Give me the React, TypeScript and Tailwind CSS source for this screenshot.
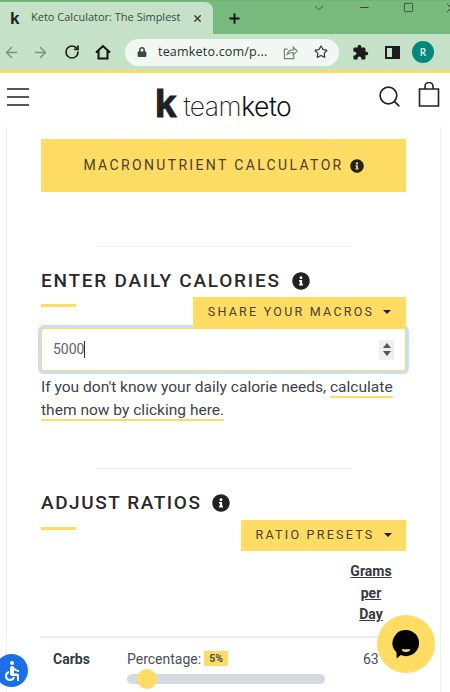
import { ArrowLeft, ArrowRight, ChevronDown, Minus, Plus, RotateCw, Search, Square, Star, X } from 'lucide-react';
import { FaInfoCircle, FaLock } from 'react-icons/fa';
import { MdAccessible, MdExtension } from 'react-icons/md';

function BrowserChrome() {
    return (
        <div className="flex flex-col font-['Open_Sans',sans-serif]">
            <div className="flex h-[34px] items-stretch border-t border-[#6fb376] bg-[#78b97d] pt-px">
                <div className="flex w-[213px] items-center rounded-tr-lg bg-[#c5e1c7] pl-[10px] pr-[10px]">
                    <span className="w-[21px] font-['Liberation_Sans',sans-serif] text-[17px] leading-none font-bold text-[#202124]">k</span>
                    <span className="mb-[1px] w-[160px] truncate text-[11px] whitespace-nowrap text-[#3c4a40]">Keto Calculator: The Simplest</span>
                    <X className="ml-auto h-[11px] w-[11px] text-[#333]" strokeWidth={3} />
                </div>
                <div className="relative flex flex-1 items-center pl-[14px]">
                    <Plus className="h-[15px] w-[15px] text-[#111]" strokeWidth={3} />
                    <div className="absolute top-0 right-[-8px] flex h-[11px] items-center gap-[32px]">
                        <ChevronDown className="h-[14px] w-[14px] text-[#2b4a30]" strokeWidth={1.5} />
                        <Minus className="h-[13px] w-[13px] text-[#1d3320]" strokeWidth={1.5} />
                        <Square className="h-[11px] w-[11px] text-[#1d3320]" strokeWidth={1.5} />
                        <X className="-ml-[2px] h-[14px] w-[14px] text-[#1d3320]" strokeWidth={1.5} />
                    </div>
                </div>
            </div>
            <div className="flex h-[36px] items-center bg-[#c5e1c7] pl-[3px]">
                <ArrowLeft className="h-[17px] w-[17px] text-[#7f8f82]" strokeWidth={2} />
                <ArrowRight className="ml-[12px] h-[17px] w-[17px] text-[#7f8f82]" strokeWidth={2} />
                <RotateCw className="ml-[15px] h-[16px] w-[16px] text-[#222]" strokeWidth={2.6} />
                <svg viewBox="0 0 18 18" className="ml-[14px] h-[18px] w-[18px] text-[#111]" fill="none" stroke="currentColor" strokeWidth="2">
                    <path d="M2 9.5 9 3l7 6.5M4.5 8v7.5h9V8" />
                </svg>
                <div className="ml-[13px] flex h-[27px] w-[214px] items-center rounded-full bg-[#f1f7f2] pl-[12px]">
                    <FaLock className="h-[10px] w-[10px] text-[#444]" />
                    <span className="ml-[11px] w-[110px] text-[12.5px] tracking-[0.2px] whitespace-nowrap text-[#27332a]">teamketo.com/p...</span>
                    <svg viewBox="0 0 16 16" className="ml-[15px] h-[15px] w-[15px] text-[#77807a]" fill="none" stroke="currentColor" strokeWidth="1.3">
                        <path d="M5 4.5H1.5v10h10V11" />
                        <path d="M4.5 10c.6-3 3-4.8 6.5-4.8V2.5l4 4-4 4V8c-2.800 0-4.800.4-6.500 2Z" />
                    </svg>
                    <Star className="ml-[16px] h-[14px] w-[14px] text-[#333]" strokeWidth={2} />
                </div>
                <MdExtension className="ml-[13px] h-[17px] w-[17px] text-[#1c1c1c]" />
                <div className="ml-[16px] flex h-[13px] w-[15px] justify-end border-2 border-[#1c1c1c]">
                    <div className="h-full w-[6px] bg-[#1c1c1c]" />
                </div>
                <div className="ml-[12px] flex h-[22px] w-[22px] items-center justify-center rounded-full bg-[#00897b] text-[10px] font-semibold text-[#e6f3f0]">R</div>
            </div>
            <div className="h-[3px] bg-[#ffdc64]" />
        </div>
    );
}

function SiteHeader() {
    return (
        <div className="relative flex h-[54px] items-center justify-center bg-white">
            <div className="absolute top-[15px] left-[7px] flex w-[22px] flex-col gap-[6.5px]">
                <div className="h-[1.5px] bg-[#555]" />
                <div className="h-[1.5px] bg-[#555]" />
                <div className="h-[1.5px] bg-[#555]" />
            </div>
            <div className="mr-[4px] flex items-end pt-[7px]">
                <span className="font-['Liberation_Sans',sans-serif] text-[39px] leading-[30px] font-bold text-[#222] [-webkit-text-stroke:1px_#222]">k</span>
                <span className="ml-[7px] font-['Inter',sans-serif] text-[26.5px] leading-[25px] font-extralight tracking-[-0.5px] text-[#222]">
                    team<span className="font-light text-[#111]">keto</span>
                </span>
            </div>
            <Search className="absolute top-[11px] right-[48px] h-[25px] w-[25px] text-[#222]" strokeWidth={1.6} />
            <svg viewBox="0 0 22 25" className="absolute top-[9px] right-[10px] h-[25px] w-[22px] text-[#222]" fill="none" stroke="currentColor" strokeWidth="1.6">
                <path d="M1.500 7h19v17h-19z" />
                <path d="M7 7V4.500a4 4 0 0 1 8 0V7" />
            </svg>
        </div>
    );
}

function SectionHeading({ title, spacing }: { title: string; spacing: string }) {
    return (
        <div className="flex items-center">
            <h2 className={`text-[19px] leading-[24px] font-medium whitespace-nowrap text-[#2a2a2a] ${spacing}`}>{title}</h2>
            <FaInfoCircle className="ml-[11px] h-[18px] w-[18px] text-[#222]" />
        </div>
    );
}

function Dropdown({ label, width }: { label: string; width: string }) {
    return (
        <div className={`flex h-[31px] items-center justify-center gap-[9px] bg-[#ffdc64] text-[12.5px] tracking-[2.25px] text-[#4a4030] ${width}`}>
            <span className="whitespace-nowrap">{label}</span>
            <div className="mb-[2px] h-0 w-0 border-x-[4px] border-t-[4px] border-x-transparent border-t-[#222]" />
        </div>
    );
}

export default function App() {
    return (
        <div className="relative h-[692px] w-[450px] overflow-hidden bg-white font-['Roboto',sans-serif] text-[#343a40]">
            <BrowserChrome />
            <SiteHeader />
            <div className="mx-[6px] h-[565px] w-[435px] border-x border-[#f0f0f0] px-[34px] pt-[12px]">
                <div className="flex h-[53px] items-center justify-center gap-[6px] bg-[#ffdc64] text-[14px] tracking-[2.35px] text-[#4a4030]">
                    <span className="whitespace-nowrap">MACRONUTRIENT CALCULATOR</span>
                    <FaInfoCircle className="h-[14px] w-[14px] text-[#222]" />
                </div>

                <div className="mx-auto mt-[54px] h-px w-[256px] bg-[#f0f0f0]" />

                <div className="mt-[22px]">
                    <SectionHeading title="ENTER DAILY CALORIES" spacing="tracking-[1.75px]" />
                </div>
                <div className="relative flex h-[26px] justify-end">
                    <div className="absolute top-[11px] left-0 h-[3px] w-[35px] bg-[#ffdc64]" />
                    <div className="mt-[4px]">
                        <Dropdown label="SHARE YOUR MACROS" width="w-[213px]" />
                    </div>
                </div>
                <div className="mt-[9px] flex h-[43px] items-center rounded-[3px] border border-[#ffdc64] bg-white pr-[11px] pl-[11px] shadow-[0_0_0_3px_#c5e0f9] text-[14px] text-[#5c6670]">
                    <span>5000</span>
                    <div className="h-[17px] w-px bg-[#333]" />
                    <div className="ml-auto flex h-[20px] w-[15px] flex-col items-center justify-center gap-[3px] bg-[#f0f0f0]">
                        <div className="h-0 w-0 border-x-[4px] border-b-[5px] border-x-transparent border-b-[#555]" />
                        <div className="h-0 w-0 border-x-[4px] border-t-[5px] border-x-transparent border-t-[#555]" />
                    </div>
                </div>
                <p className="mt-[5px] text-[15.55px] leading-[23px] whitespace-nowrap text-[#3d4248]">
                    If you don't know your daily calorie needs,{' '}
                    <span className="border-b-2 border-[#ffdc64]">calculate</span>
                    <br />
                    <span className="border-b-2 border-[#ffdc64]">them now by clicking here.</span>
                </p>

                <div className="mx-auto mt-[46px] h-px w-[256px] bg-[#ebedef]" />

                <div className="mt-[22px]">
                    <SectionHeading title="ADJUST RATIOS" spacing="tracking-[1.55px]" />
                </div>
                <div className="relative flex h-[37px] justify-end">
                    <div className="absolute top-[12px] left-0 h-[3px] w-[35px] bg-[#ffdc64]" />
                    <div className="mt-[5px]">
                        <Dropdown label="RATIO PRESETS" width="w-[165px]" />
                    </div>
                </div>
                <div className="mt-[9px] flex justify-end border-b-2 border-[#e9ecef] pr-[10px] pb-[10px]">
                    <div className="w-[50px] text-center text-[14px] leading-[21.5px] font-bold text-[#343a40] underline">
                        Grams
                        <br />
                        per
                        <br />
                        Day
                    </div>
                </div>
                <div className="flex pt-[11px] text-[14px] leading-[20px]">
                    <div className="w-[86px] pl-[12px] font-bold">Carbs</div>
                    <div className="w-[198px]">
                        <div className="flex items-center text-[#4a4f55]">
                            <span>Percentage:</span>
                            <span className="ml-[3px] bg-[#ffdc64] px-[5px] text-[10.5px] leading-[15px] font-bold">5%</span>
                        </div>
                        <div className="relative mt-[5px] h-[10px] rounded-full bg-[#d5dade]">
                            <div className="absolute top-[-5px] left-[10px] h-[20px] w-[20px] rounded-full bg-[#ffdc64]" />
                        </div>
                    </div>
                    <div className="ml-[38px] text-[#4a4f55]">63</div>
                </div>
            </div>

            <div className="absolute top-[615px] left-[377px] flex h-[58px] w-[58px] items-center justify-center rounded-full bg-[#ffdc64]">
                <svg viewBox="0 0 30 32" className="h-[30px] w-[28px]">
                    <path d="M15 1a14 14 0 0 1 0 28c-2 0-4-.4-5.600-1.200L5 31.500 4.800 25A14 14 0 0 1 15 1Z" fill="#000" />
                    <path d="M10.500 21.500h9a4.500 3 0 0 1-9 0Z" fill="#ffdc64" />
                </svg>
            </div>
            <div className="absolute top-[654px] left-[-5px] flex h-[33px] w-[33px] items-center justify-center rounded-full bg-[#1a6fe8]">
                <MdAccessible className="h-[24px] w-[24px] text-white" />
            </div>
        </div>
    );
}
